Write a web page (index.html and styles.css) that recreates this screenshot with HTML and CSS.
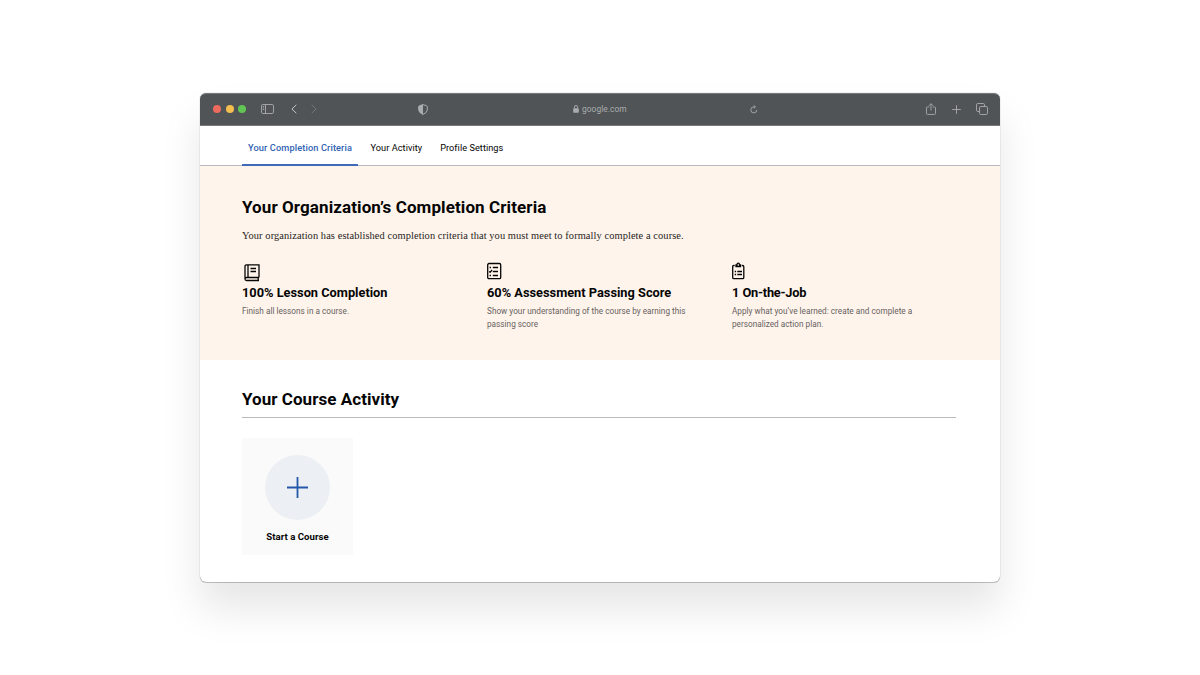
FILE: index.html
```html
<!DOCTYPE html>
<html lang="en">
<head>
    <meta charset="UTF-8">
    <meta name="viewport" content="width=device-width, initial-scale=1.0">
    <title>Your Completion Criteria</title>
    <link rel="stylesheet" href="styles.css">
</head>
<body>
    <div class="browser">
        <header class="toolbar">
            <div class="toolbar-left">
                <span class="dot dot-red"></span>
                <span class="dot dot-yellow"></span>
                <span class="dot dot-green"></span>
                <svg class="icon-sidebar" width="13" height="10" viewBox="0 0 13 10">
                    <rect x=".5" y=".5" width="12" height="9" rx="1.3" />
                    <path d="M4.5 .5v9M1.8 2.5h1.4M1.8 4h1.4M1.8 5.5h1.4" />
                </svg>
                <svg class="icon-back" width="6" height="10" viewBox="0 0 6 10"><path d="M5.3 .8L.9 5l4.4 4.2" /></svg>
                <svg class="icon-forward" width="6" height="10" viewBox="0 0 6 10"><path d="M.7 .8L5.1 5 .7 9.2" /></svg>
            </div>
            <svg class="icon-shield" width="10" height="11" viewBox="0 0 10 11">
                <path d="M5 .6l3.7 1.2q.6.2.6.8v3.2q0 2.8-4.3 4.7Q.7 8.6.7 5.8V2.6q0-.6.6-.8z" />
                <path class="fill" d="M5 .6v9.9Q.7 8.6.7 5.8V2.6q0-.6.6-.8z" />
            </svg>
            <div class="address">
                <svg width="6" height="8" viewBox="0 0 6 8">
                    <rect class="fill" x=".2" y="3.3" width="5.6" height="4.4" rx=".7" />
                    <path d="M1.4 3.6V2.2a1.6 1.7 0 0 1 3.2 0v1.4" />
                </svg>
                <span>google.com</span>
            </div>
            <svg class="icon-reload" width="8" height="9" viewBox="0 0 8 9">
                <path d="M6.8 4.9A3 3 0 1 1 3.8 1.9h1.4M3.7 .3l1.7 1.6-1.7 1.6" />
            </svg>
            <div class="toolbar-right">
                <svg width="10" height="12" viewBox="0 0 10 12"><path d="M3.2 4H1.3Q.5 4 .5 4.8v5.7q0 .9.9.9h7.2q.9 0 .9-.9V4.8Q9.5 4 8.7 4H6.8M5 7.5V.8M2.9 2.8L5 .7l2.1 2.1" /></svg>
                <svg width="9" height="9" viewBox="0 0 9 9"><path d="M4.5 .2v8.6M.2 4.5h8.6" /></svg>
                <svg width="12" height="12" viewBox="0 0 12 12"><rect x="3.5" y="3.5" width="8" height="8" rx="1.3" /><path d="M3.5 8.5H1.8Q.5 8.5.5 7.2V1.8Q.5.5 1.8.5h5.4q1.3 0 1.3 1.3v1.7" /></svg>
            </div>
        </header>

        <nav class="tabs">
            <a class="tab active">Your Completion Criteria</a>
            <a class="tab tab-activity">Your Activity</a>
            <a class="tab tab-profile">Profile Settings</a>
        </nav>

        <section class="criteria">
            <h1>Your Organization’s Completion Criteria</h1>
            <p class="intro">Your organization has established completion criteria that you must meet to formally complete a course.</p>
            <div class="criteria-grid">
                <div class="criterion">
                    <svg width="20" height="20" viewBox="0 0 20 20">
                        <path d="M3 17V4.300q0-1.500 1.500-1.500H17v12.700M6 2.800v12.700M17 15.500H4.600a1.600 1.500 0 0 0 0 3H17M16.200 15.500v3M8.500 6.500H14M8.500 9.500H14" />
                    </svg>
                    <h2>100% Lesson Completion</h2>
                    <p>Finish all lessons in a course.</p>
                </div>
                <div class="criterion">
                    <svg width="20" height="20" viewBox="0 0 20 20">
                        <rect x=".7" y="1.5" width="13" height="15.2" rx="1.3" />
                        <path d="M5.8 5.5H11M5.8 9.5H11M5.8 13.500H11M2.600 5.500H4M2.600 13.500H4M2.200 9.400l.9.900L5 8" />
                    </svg>
                    <h2>60% Assessment Passing Score</h2>
                    <p>Show your understanding of the course by earning this<br>passing score</p>
                </div>
                <div class="criterion">
                    <svg width="20" height="20" viewBox="0 0 20 20">
                        <path d="M2.700 3.500H1.900Q.7 3.500.7 4.700v10.800q0 1.200 1.200 1.200h8.700q1.200 0 1.200-1.200V4.700q0-1.200-1.200-1.200H9.800" />
                        <path d="M4 4.500V3h1Q5 1.200 6.250 1.200T7.500 3h1v1.500z" />
                        <path d="M5.300 9.500h4.700M5.300 12.500h4.700M2.700 9.500h1.400M2.700 12.500h1.400" />
                    </svg>
                    <h2 class="h-job">1 On-the-Job</h2>
                    <p>Apply what you’ve learned: create and complete a<br>personalized action plan.</p>
                </div>
            </div>
        </section>

        <section class="activity">
            <h1>Your Course Activity</h1>
            <a class="start-card">
                <span class="plus">
                    <svg width="21" height="21" viewBox="0 0 21 21"><path d="M10.5 0v21M0 10.5h21" /></svg>
                </span>
                <span class="start-label">Start a Course</span>
            </a>
        </section>
    </div>
</body>
</html>
```
FILE: styles.css
```css
* {
    box-sizing: border-box;
}

body {
    margin: 0;
    height: 675px;
    padding-top: 93px;
    background: #fff;
    color: #050505;
    font-family: Roboto, "Liberation Sans", sans-serif;
    overflow: hidden;
}

h1, h2, p {
    margin: 0;
    white-space: nowrap;
}

svg {
    display: block;
    flex: none;
    fill: none;
    stroke: currentColor;
}

.fill {
    fill: currentColor;
    stroke: none;
}

.browser {
    width: 800px;
    height: 489px;
    margin: 0 auto;
    border-radius: 6px;
    background: #fff;
    box-shadow: 0 0 1px rgba(0, 0, 0, 0.5), 0 1px 0 rgba(0, 0, 0, 0.18), 0 26px 40px rgba(0, 0, 0, 0.1);
}

/* browser bar */
.toolbar {
    display: grid;
    grid-template-columns: 218px 155px 177px 172px 1fr;
    align-items: center;
    height: 33px;
    padding-bottom: 1px;
    border-radius: 6px 6px 0 0;
    border-top: 1px solid #77797b;
    border-bottom: 1px solid #77797b;
    background: #505457;
    color: #a9acae;
}

.toolbar-left {
    display: flex;
    align-items: center;
    padding-left: 13px;
}

.dot {
    width: 8px;
    height: 8px;
    margin-right: 4.5px;
    border-radius: 50%;
}

.dot-red {
    background: #ed6a5e;
}

.dot-yellow {
    background: #f4bf4f;
}

.dot-green {
    background: #61c554;
}

.icon-sidebar {
    margin-left: 10.5px;
    stroke-width: 0.9;
}

.icon-back {
    margin-left: 16.5px;
    color: #c2c4c5;
}

.icon-forward {
    margin-left: 14.5px;
    color: #73777a;
}

.address {
    display: flex;
    align-items: center;
    gap: 3px;
    font-size: 8.4px;
    letter-spacing: 0.05px;
}

.icon-reload {
    stroke-width: 0.9;
}

.toolbar-right {
    display: flex;
    align-items: center;
    gap: 15.5px;
    padding-left: 4px;
    stroke-width: 0.9;
}

/* page tabs */
.tabs {
    display: flex;
    height: 40px;
    padding-left: 42px;
    border-bottom: 1px solid #b9babd;
}

.tab {
    height: 40px;
    padding: 0 6px;
    font-size: 9.2px;
    line-height: 44px;
    letter-spacing: 0.05px;
    white-space: nowrap;
}

.tab.active {
    width: 116px;
    margin-right: 6.5px;
    border-bottom: 2px solid #3d6bb8;
    color: #2f62b4;
    font-weight: 500;
    letter-spacing: 0.13px;
}

.tab-profile {
    margin-left: 6px;
}

.criteria {
    height: 194px;
    padding: 29px 42px 0;
    background: #fff4eb;
}

h1 {
    font-size: 17px;
    font-weight: 700;
    line-height: 24px;
    letter-spacing: 0.1px;
}

.intro {
    margin-top: 10px;
    font-family: "Liberation Serif", serif;
    font-size: 10.4px;
    line-height: 14px;
    letter-spacing: 0.09px;
    color: #1f1d1b;
}

.criteria-grid {
    display: grid;
    grid-template-columns: repeat(3, 245px);
    margin-top: 19px;
}

.criterion svg {
    stroke-width: 1.3;
}

h2 {
    margin-top: 3px;
    font-size: 12.8px;
    font-weight: 700;
    line-height: 16px;
}

.h-job {
    letter-spacing: -0.25px;
    word-spacing: 0.5px;
}

.criterion p {
    margin-top: 4px;
    font-size: 8.2px;
    line-height: 12.5px;
    letter-spacing: 0.02px;
    color: #65615f;
}

.activity {
    padding: 27px 44px 0 42px;
}

.activity h1 {
    height: 31px;
    border-bottom: 1px solid #babbbc;
    letter-spacing: 0.05px;
}

.start-card {
    display: flex;
    flex-direction: column;
    align-items: center;
    width: 111px;
    height: 117px;
    margin-top: 20px;
    padding-top: 17px;
    background: #fafafa;
}

.plus {
    display: flex;
    align-items: center;
    justify-content: center;
    width: 65px;
    height: 65px;
    border-radius: 50%;
    background: #ecf0f4;
    color: #2458a8;
}

.plus svg {
    stroke-width: 1.8;
}

.start-label {
    margin-top: 10px;
    font-size: 9.6px;
    font-weight: 700;
    line-height: 14px;
    letter-spacing: 0.05px;
    white-space: nowrap;
}
```
